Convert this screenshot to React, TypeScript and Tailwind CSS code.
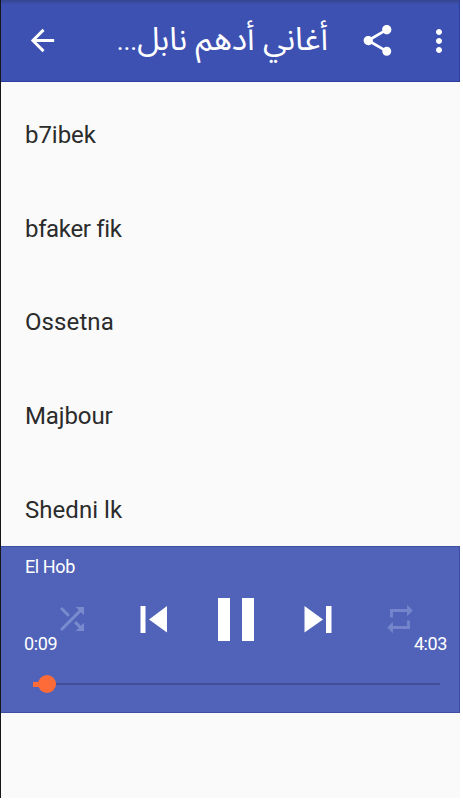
import React from "react";

const songs = [
  { title: "b7ibek", spacing: "tracking-[-0.05px]" },
  { title: "bfaker fik", spacing: "tracking-[-0.35px]" },
  { title: "Ossetna", spacing: "tracking-[0.1px]" },
  { title: "Majbour", spacing: "tracking-[-0.1px]" },
  { title: "Shedni lk", spacing: "tracking-[0.05px]" },
];

function Icon({ d, className }: { d: string; className: string }) {
  return (
    <svg viewBox="0 0 24 24" fill="currentColor" className={"shrink-0 " + className}>
      <path d={d} />
    </svg>
  );
}

function Header() {
  return (
    <header className="flex h-[82px] shrink-0 items-center border-b border-r border-[#2c3fa0] bg-[#3d51b3] bg-linear-to-b from-[#35458f] via-[#3d51b3] via-[6%] to-[#3d51b3] text-white">
      <Icon className="ml-[24px] h-[35px] w-[35px]" d="M20 11H7.83l5.59-5.59L12 4l-8 8 8 8 1.41-1.41L7.83 13H20v-2z" />
      <h1 dir="rtl" className="ml-[32px] w-[236px] whitespace-nowrap font-['Noto_Sans_Arabic','Noto_Sans','DejaVu_Sans',sans-serif] text-[32px] leading-[40px]">
        أغاني أدهم نابل<span className="font-[Roboto,sans-serif] text-[26px] tracking-[-0.4px]">...</span>
      </h1>
      <Icon className="ml-[31px] h-[37px] w-[37px]" d="M18 16.08c-.76 0-1.44.3-1.96.77L8.91 12.7c.05-.23.09-.46.09-.7s-.04-.47-.09-.7l7.05-4.11c.54.5 1.25.81 2.04.81 1.66 0 3-1.34 3-3s-1.34-3-3-3-3 1.34-3 3c0 .24.04.47.09.7L8.04 9.81C7.5 9.31 6.79 9 6 9c-1.66 0-3 1.34-3 3s1.34 3 3 3c.79 0 1.5-.31 2.04-.81l7.12 4.16c-.05.21-.08.43-.08.65 0 1.61 1.31 2.92 2.92 2.92s2.92-1.31 2.92-2.92-1.31-2.92-2.92-2.92z" />
      <Icon className="ml-[25px] h-[36px] w-[36px]" d="M12 8c1.1 0 2-.9 2-2s-.9-2-2-2-2 .9-2 2 .9 2 2 2zm0 2c-1.1 0-2 .9-2 2s.9 2 2 2 2-.9 2-2-.9-2-2-2zm0 6c-1.1 0-2 .9-2 2s.9 2 2 2 2-.9 2-2-.9-2-2-2z" />
    </header>
  );
}

function Player() {
  return (
    <section className="flex h-[167px] shrink-0 flex-col border-y border-r border-[#3e4fa3] bg-[#5063b8] text-white">
      <div className="mt-[9px] h-[24px] pl-[24px] text-[18px] leading-[22px] tracking-[-0.4px]">El Hob</div>
      <div className="mt-[16px] flex h-[46px] items-center">
        <Icon className="ml-[53px] h-[36px] w-[36px] text-[#7a8ace]" d="M10.59 9.17L5.41 4 4 5.41l5.17 5.17 1.42-1.41zM14.5 4l2.04 2.04L4 18.59 5.41 20 17.96 7.46 20 9.5V4h-5.5zm.33 9.41l-1.41 1.41 3.13 3.13L14.5 20H20v-5.5l-2.04 2.04-3.13-3.13z" />
        <svg viewBox="0 0 27 27" fill="currentColor" className="ml-[50px] h-[27px] w-[27px] shrink-0">
          <path d="M.5 0H5.5V27H.5zM27 0V26.5L9 13.5z" />
        </svg>
        <svg viewBox="0 0 36 43" fill="currentColor" className="ml-[51px] h-[43px] w-[36px] shrink-0">
          <path d="M0 0H12V43H0zM24 0H36V43H24z" />
        </svg>
        <svg viewBox="0 0 28 27" fill="currentColor" className="ml-[50px] h-[27px] w-[28px] shrink-0">
          <path d="M.5 0V26.5L19 13.5zM22 0H27.5V27H22z" />
        </svg>
        <Icon className="ml-[51px] h-[34px] w-[34px] text-[#7585cb]" d="M7 7h10v3l4-4-4-4v3H5v6h2V7zm10 10H7v-3l-4 4 4 4v-3h12v-6h-2v4z" />
      </div>
      <div className="-mt-[9px] flex h-[22px] justify-between pl-[23px] pr-[12px] text-[18px] leading-[22px] tracking-[-0.4px]">
        <span>0:09</span>
        <span>4:03</span>
      </div>
      <div className="ml-[32px] mt-[20px] flex h-[18px] w-[407px] items-center">
        <div className="h-[5px] w-[7px] bg-[#ff6b38]" />
        <div className="-ml-[2px] h-[18px] w-[18px] rounded-full bg-[#ff6b38]" />
        <div className="h-[2px] flex-1 bg-[#414f9b]" />
      </div>
    </section>
  );
}

export default function App() {
  return (
    <div className="h-[800px] w-[463px] overflow-hidden bg-white font-[Roboto,sans-serif]">
      <div className="flex h-[798px] w-[460px] flex-col border-l border-[#17171b] bg-[#fafafa]">
        <Header />
        <ul className="flex h-[464px] shrink-0 flex-col overflow-hidden pt-[6px] text-[24px] text-[#2b2b2b]">
          {songs.map(({ title, spacing }) => (
            <li key={title} className={"flex h-[93.75px] shrink-0 items-center pl-[24px] leading-[28px] " + spacing}>
              {title}
            </li>
          ))}
        </ul>
        <Player />
      </div>
    </div>
  );
}
